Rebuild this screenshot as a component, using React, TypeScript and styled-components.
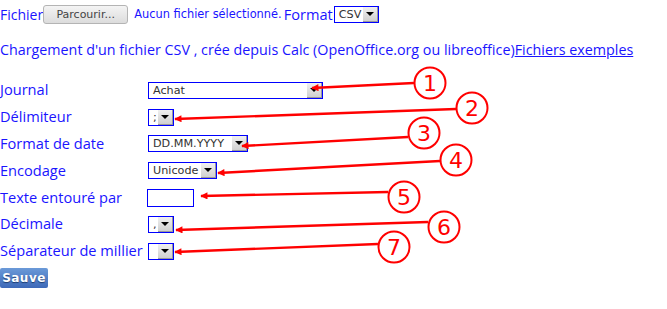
import styled, { createGlobalStyle } from "styled-components";

const GlobalStyle = createGlobalStyle`
  html, body {
    margin: 0;
    padding: 0;
    background: #ffffff;
  }
  body {
    font-family: "Open Sans", "DejaVu Sans", sans-serif;
    color: #1a14ff;
  }
`;

const Page = styled.div`
  position: relative;
  width: 667px;
  height: 309px;
  overflow: hidden;
`;

const TopRow = styled.div`
  display: flex;
  align-items: center;
  height: 28px;
  font-size: 14px;
`;

const FileButton = styled.button`
  height: 19px;
  width: 85px;
  padding: 0;
  border: 1px solid #b4b4b4;
  border-radius: 3px;
  background: linear-gradient(#f4f4f4, #dcdcdc);
  font-family: "DejaVu Sans", sans-serif;
  font-size: 11px;
  color: #444;
`;

const NoFile = styled.span`
  margin-left: 6px;
  font-family: "DejaVu Sans", sans-serif;
  font-size: 11.4px;
`;

const FormatLabel = styled.span`
  margin-left: 2px;
  margin-right: 1px;
  font-size: 14.6px;
`;

const Intro = styled.div`
  margin-top: 12px;
  height: 20px;
  line-height: 20px;
  font-size: 14.3px;
  white-space: nowrap;
`;

const Link = styled.a`
  color: #1a14ff;
  text-decoration: underline;
`;

const Form = styled.div`
  display: grid;
  grid-template-columns: 148px auto;
  grid-auto-rows: 26.8px;
  align-items: center;
  margin-top: 17px;
`;

const Label = styled.div`
  font-size: 14.6px;
  line-height: 18px;
  white-space: nowrap;
  margin-top: -2px;
`;

const SelectBox = styled.div<{ $w: number }>`
  display: flex;
  width: ${(p) => p.$w}px;
  height: 17px;
  box-sizing: border-box;
  border: 1px solid #0000ff;
  background: #fff;
`;

const SelectValue = styled.span`
  flex: 1;
  padding-left: 4px;
  font-family: "DejaVu Sans", sans-serif;
  font-size: 11.2px;
  line-height: 15px;
  color: #333;
  overflow: hidden;
  white-space: nowrap;
`;

const ArrowButton = styled.span`
  position: relative;
  flex: none;
  width: 15px;
  background: linear-gradient(#f0f0f0, #d0d0d0);
  border-right: 1px solid #9a9a9a;
  border-bottom: 1px solid #9a9a9a;
  box-sizing: border-box;
  &::after {
    content: "";
    position: absolute;
    left: 3px;
    top: 5px;
    border-left: 4px solid transparent;
    border-right: 4px solid transparent;
    border-top: 4px solid #000;
  }
`;

const TextBox = styled.div`
  width: 47px;
  height: 18px;
  box-sizing: border-box;
  border: 1px solid #0000ff;
  margin-left: -1px;
`;

const SaveButton = styled.button`
  margin-top: -1px;
  width: 48px;
  height: 20px;
  padding: 0;
  border: none;
  border-radius: 2px;
  background: linear-gradient(#6b9ad8, #3d69b8);
  color: #fff;
  font-family: "DejaVu Sans", sans-serif;
  font-weight: bold;
  font-size: 12px;
  letter-spacing: 0.5px;
  text-shadow: 0 1px 1px #1d3c70;
`;

const Overlay = styled.svg`
  position: absolute;
  left: 0;
  top: 0;
  pointer-events: none;
`;

const Select = ({ w, value }: { w: number; value: string }) => (
  <SelectBox $w={w}>
    <SelectValue>{value}</SelectValue>
    <ArrowButton />
  </SelectBox>
);

const callouts = [
  { n: 1, cx: 430, cy: 83, x1: 414, y1: 83, x2: 312, y2: 88 },
  { n: 2, cx: 472, cy: 108, x1: 456, y1: 109, x2: 175, y2: 119 },
  { n: 3, cx: 424, cy: 133, x1: 408, y1: 137, x2: 242, y2: 146 },
  { n: 4, cx: 456, cy: 160, x1: 440, y1: 161, x2: 218, y2: 173 },
  { n: 5, cx: 404, cy: 197, x1: 388, y1: 192, x2: 201, y2: 196 },
  { n: 6, cx: 444, cy: 227, x1: 428, y1: 222, x2: 176, y2: 230 },
  { n: 7, cx: 394, cy: 247, x1: 378, y1: 244, x2: 175, y2: 252 },
];

const App = () => {
  return (
    <Page>
      <GlobalStyle />
      <TopRow>
        <span>Fichier</span>
        <FileButton>Parcourir...</FileButton>
        <NoFile>Aucun fichier sélectionné.</NoFile>
        <FormatLabel>Format</FormatLabel>
        <Select w={45} value="CSV" />
      </TopRow>
      <Intro>
        Chargement d'un fichier CSV , crée depuis Calc (OpenOffice.org ou libreoffice)
        <Link href="#">Fichiers exemples</Link>
      </Intro>
      <Form>
        <Label>Journal</Label>
        <Select w={175} value="Achat" />
        <Label>Délimiteur</Label>
        <Select w={26} value=";" />
        <Label>Format de date</Label>
        <Select w={100} value="DD.MM.YYYY" />
        <Label>Encodage</Label>
        <Select w={69} value="Unicode" />
        <Label>Texte entouré par</Label>
        <TextBox />
        <Label>Décimale</Label>
        <Select w={26} value="," />
        <Label>Séparateur de millier</Label>
        <Select w={26} value="" />
      </Form>
      <SaveButton>Sauve</SaveButton>
      <Overlay width={667} height={309}>
        <defs>
          <marker id="head" viewBox="0 0 10 10" refX="9" refY="5" markerWidth="3.8" markerHeight="3" orient="auto">
            <path d="M0 0 L10 5 L0 10 Z" fill="#ff0000" />
          </marker>
        </defs>
        {callouts.map((c) => (
          <g key={c.n}>
            <line x1={c.x1} y1={c.y1} x2={c.x2} y2={c.y2} stroke="#ff0000" strokeWidth={2.4} markerEnd="url(#head)" />
            <circle cx={c.cx} cy={c.cy} r={15.5} fill="none" stroke="#ff0000" strokeWidth={2} />
            <text x={c.cx} y={c.cy + 8} textAnchor="middle" fill="#ff0000" fontFamily="DejaVu Sans, sans-serif" fontSize={22}>
              {c.n}
            </text>
          </g>
        ))}
      </Overlay>
    </Page>
  );
};

export default App;
